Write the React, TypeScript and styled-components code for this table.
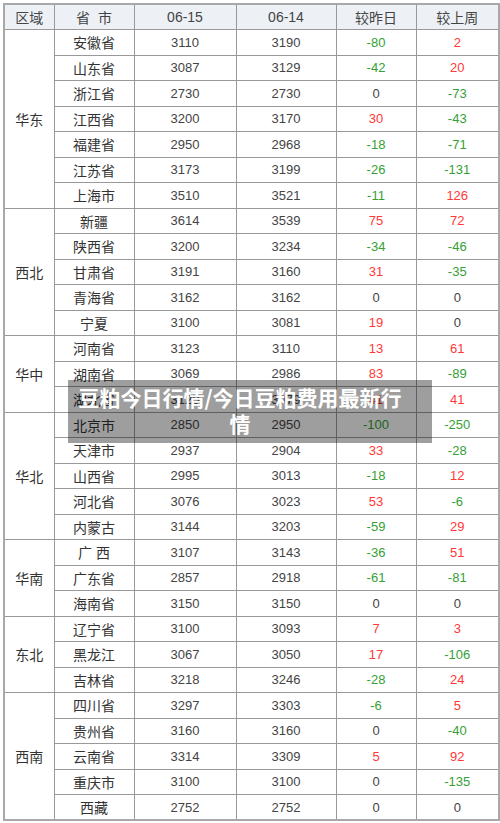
import React from 'react';
import styled, { createGlobalStyle } from 'styled-components';

type Row = [string, number, number, number, number];

interface Region {
    name: string;
    rows: Row[];
}

const regions: Region[] = [
    {
        name: '华东',
        rows: [
            ['安徽省', 3110, 3190, -80, 2],
            ['山东省', 3087, 3129, -42, 20],
            ['浙江省', 2730, 2730, 0, -73],
            ['江西省', 3200, 3170, 30, -43],
            ['福建省', 2950, 2968, -18, -71],
            ['江苏省', 3173, 3199, -26, -131],
            ['上海市', 3510, 3521, -11, 126],
        ],
    },
    {
        name: '西北',
        rows: [
            ['新疆', 3614, 3539, 75, 72],
            ['陕西省', 3200, 3234, -34, -46],
            ['甘肃省', 3191, 3160, 31, -35],
            ['青海省', 3162, 3162, 0, 0],
            ['宁夏', 3100, 3081, 19, 0],
        ],
    },
    {
        name: '华中',
        rows: [
            ['河南省', 3123, 3110, 13, 61],
            ['湖南省', 3069, 2986, 83, -89],
            ['湖北省', 3120, 3079, 41, 41],
        ],
    },
    {
        name: '华北',
        rows: [
            ['北京市', 2850, 2950, -100, -250],
            ['天津市', 2937, 2904, 33, -28],
            ['山西省', 2995, 3013, -18, 12],
            ['河北省', 3076, 3023, 53, -6],
            ['内蒙古', 3144, 3203, -59, 29],
        ],
    },
    {
        name: '华南',
        rows: [
            ['广 西', 3107, 3143, -36, 51],
            ['广东省', 2857, 2918, -61, -81],
            ['海南省', 3150, 3150, 0, 0],
        ],
    },
    {
        name: '东北',
        rows: [
            ['辽宁省', 3100, 3093, 7, 3],
            ['黑龙江', 3067, 3050, 17, -106],
            ['吉林省', 3218, 3246, -28, 24],
        ],
    },
    {
        name: '西南',
        rows: [
            ['四川省', 3297, 3303, -6, 5],
            ['贵州省', 3160, 3160, 0, -40],
            ['云南省', 3314, 3309, 5, 92],
            ['重庆市', 3100, 3100, 0, -135],
            ['西藏', 2752, 2752, 0, 0],
        ],
    },
];

const GlobalStyle = createGlobalStyle`
  html, body {
    margin: 0;
    padding: 0;
    background: #fff;
  }
`

const Page = styled.div`
  position: relative;
  width: 500px;
  height: 823px;
  padding: 3px 0 0 3px;
  box-sizing: border-box;
  font-family: "Liberation Sans", "Noto Sans CJK SC", sans-serif;
`

const Table = styled.table`
  width: 495px;
  border-collapse: collapse;
  table-layout: fixed;
  border: 2px solid #a8a8a8;
  font-size: 13px;
  color: #444;
`

const HeadCell = styled.th`
  height: 24px;
  padding: 0;
  background: #edf1f6;
  border: 1px solid #999;
  font-weight: normal;
  font-size: 14px;
  color: #444;
  text-align: center;
  font-family: "Liberation Sans", "Noto Sans CJK SC", sans-serif;
  white-space: pre;
`

const BodyRow = styled.tr`
  height: 25.5px;
`

const Cell = styled.td<{ $tone?: 'up' | 'down' | 'flat' }>`
  padding: 0;
  border: 1px solid #999;
  text-align: center;
  white-space: pre;
  color: ${p => p.$tone === 'up' ? '#ff3838' : p.$tone === 'down' ? '#36a036' : '#444'};
`

const RegionCell = styled(Cell)`
  font-size: 14px;
  color: #333;
`

const NameCell = styled(Cell)`
  font-size: 14px;
  color: #333;
`

const Overlay = styled.div`
  position: absolute;
  left: 68px;
  top: 380px;
  width: 364px;
  height: 63px;
  box-sizing: border-box;
  padding: 4px 28px 0 8px;
  background: rgba(0, 0, 0, 0.38);
  color: #fff;
  font-family: "Noto Sans CJK SC", sans-serif;
  font-weight: 700;
  font-size: 21px;
  line-height: 26px;
  text-align: center;
`

const tone = (n: number) => n > 0 ? 'up' : n < 0 ? 'down' : 'flat';

const App = () => {
    return (
        <>
            <GlobalStyle />
            <Page>
                <Table>
                    <colgroup>
                        <col style={{ width: 50 }} />
                        <col style={{ width: 80 }} />
                        <col style={{ width: 102 }} />
                        <col style={{ width: 100 }} />
                        <col style={{ width: 80 }} />
                        <col style={{ width: 83 }} />
                    </colgroup>
                    <thead>
                        <tr>
                            <HeadCell>区域</HeadCell>
                            <HeadCell>{'省  市'}</HeadCell>
                            <HeadCell>06-15</HeadCell>
                            <HeadCell>06-14</HeadCell>
                            <HeadCell>较昨日</HeadCell>
                            <HeadCell>较上周</HeadCell>
                        </tr>
                    </thead>
                    <tbody>
                        {regions.map(region =>
                            region.rows.map((row, i) => (
                                <BodyRow key={region.name + row[0]}>
                                    {i === 0 && <RegionCell rowSpan={region.rows.length}>{region.name}</RegionCell>}
                                    <NameCell>{row[0]}</NameCell>
                                    <Cell>{row[1]}</Cell>
                                    <Cell>{row[2]}</Cell>
                                    <Cell $tone={tone(row[3])}>{row[3]}</Cell>
                                    <Cell $tone={tone(row[4])}>{row[4]}</Cell>
                                </BodyRow>
                            ))
                        )}
                    </tbody>
                </Table>
                <Overlay>豆粕今日行情/今日豆粕费用最新行情</Overlay>
            </Page>
        </>
    );
};

export default App;
